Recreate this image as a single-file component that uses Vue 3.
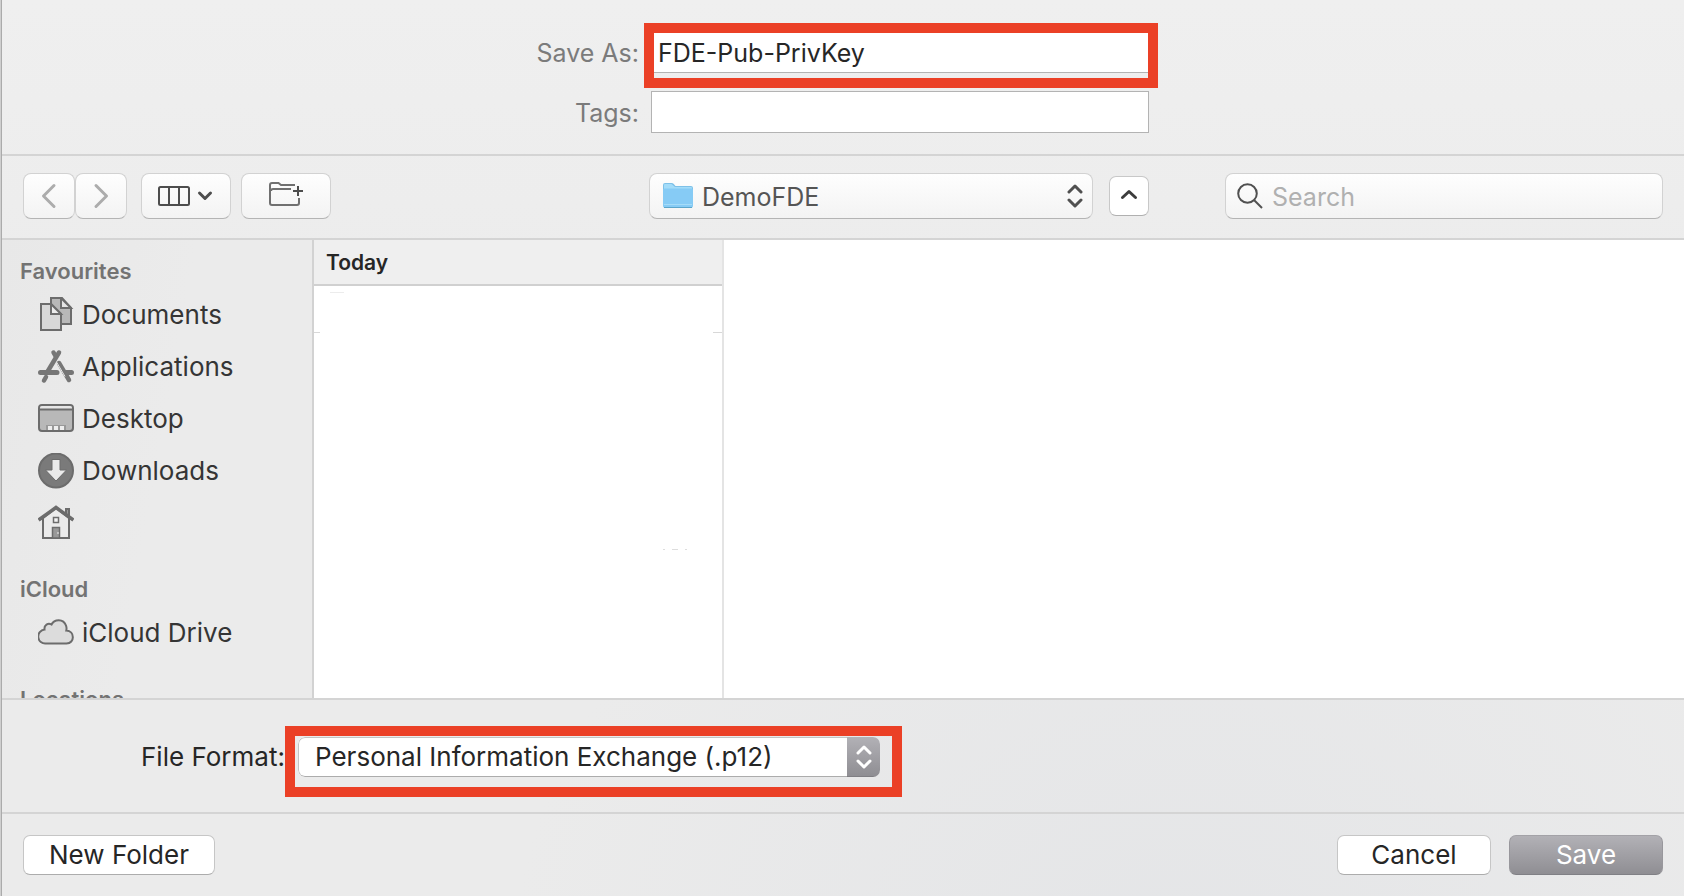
<script setup>
import { ref } from 'vue'

const fileName = ref('FDE-Pub-PrivKey')
const tags = ref('')
const search = ref('')
const location = ref('DemoFDE')
const format = ref('Personal Information Exchange (.p12)')

const sections = [
  {
    title: 'Favourites',
    items: [
      { icon: 'documents', label: 'Documents' },
      { icon: 'applications', label: 'Applications' },
      { icon: 'desktop', label: 'Desktop' },
      { icon: 'downloads', label: 'Downloads' },
      { icon: 'home', label: '' }
    ]
  },
  { title: 'iCloud', items: [{ icon: 'cloud', label: 'iCloud Drive' }] },
  { title: 'Locations', items: [] }
]
</script>

<template>
  <main class="dialog">
    <section class="names">
      <label for="name">Save As:</label>
      <div class="field marked">
        <input id="name" v-model="fileName" type="text" />
      </div>
      <label for="tags">Tags:</label>
      <div class="field">
        <input id="tags" v-model="tags" type="text" />
      </div>
    </section>

    <section class="toolbar">
      <div class="tools">
        <div class="nav">
          <button class="tool nav-btn" type="button" aria-label="Back">
            <svg width="24" height="28" viewBox="0 0 24 28"><path d="M17 3.500 6.500 14 17 24.500" fill="none" stroke="#acacac" stroke-width="3" stroke-linecap="round" stroke-linejoin="round" /></svg>
          </button>
          <button class="tool nav-btn" type="button" aria-label="Forward">
            <svg width="24" height="28" viewBox="0 0 24 28"><path d="M7 3.500 17.500 14 7 24.500" fill="none" stroke="#acacac" stroke-width="3" stroke-linecap="round" stroke-linejoin="round" /></svg>
          </button>
        </div>
        <button class="tool wide-btn" type="button" aria-label="View as columns">
          <svg width="56" height="20" viewBox="0 0 56 20" fill="none" stroke="#4d4d4d">
            <rect x="1" y="1" width="30" height="18" rx="1.500" stroke-width="2" />
            <path d="M11 1V19M21 1V19" stroke-width="2" />
            <path d="M41.500 7 47 12.500 52.500 7" stroke-width="3" stroke-linecap="round" stroke-linejoin="round" />
          </svg>
        </button>
        <button class="tool wide-btn" type="button" aria-label="New folder here">
          <svg class="new-icon" width="34" height="24" viewBox="0 0 34 24" fill="none" stroke="#707070" stroke-width="2">
            <path d="M26 3H12L9.500 1H3Q1 1 1 3V21Q1 23 3 23H28Q30 23 30 21V16" />
            <path d="M2 9Q2 7 4 7H22" />
            <path d="M29 4V14M24 9H34" stroke="#4d4d4d" />
          </svg>
        </button>
      </div>
      <div class="place">
        <div class="popup">
          <svg class="folder" width="30" height="26" viewBox="0 0 30 26">
            <path d="M0 22V2Q0 0 2 0H8.500Q10 0 11 1.200L12.500 3H28Q30 3 30 5V22Z" fill="#7ec1e8" />
            <path d="M1 7V2Q1 1 2 1H8.500L12 4H28Q29 4 29 5V7Z" fill="#a3dcf9" />
            <rect y="5.500" width="30" height="19" rx="1.500" fill="#86cbf5" />
            <path d="M1 21.500H29" stroke="#a5dcf8" />
            <path d="M1 24.500H29" stroke="#5ba5ca" />
          </svg>
          <select v-model="location" aria-label="Location">
            <option>DemoFDE</option>
          </select>
          <svg class="updown" width="16" height="26" viewBox="0 0 16 26"><path d="M2 9 8 3 14 9M2 17 8 23 14 17" fill="none" stroke="#505050" stroke-width="3" stroke-linecap="round" stroke-linejoin="round" /></svg>
        </div>
        <button class="collapse" type="button" aria-label="Collapse browser">
          <svg width="18" height="12" viewBox="0 0 18 12"><path d="M2.500 8.500 9 2.500 15.500 8.500" fill="none" stroke="#3c3c3c" stroke-width="3" stroke-linecap="round" stroke-linejoin="round" /></svg>
        </button>
      </div>
      <div class="search">
        <svg width="26" height="26" viewBox="0 0 26 26" fill="none" stroke="#505050" stroke-width="2"><circle cx="10.500" cy="10.500" r="9.300" /><path d="M17 17 25 25" /></svg>
        <input v-model="search" type="text" placeholder="Search" aria-label="Search" />
      </div>
    </section>

    <section class="browser">
      <nav class="sidebar">
        <div v-for="s in sections" :key="s.title" class="group">
          <h2>{{ s.title }}</h2>
          <a v-for="i in s.items" :key="i.icon" href="#" :aria-label="i.label || 'Home'">
            <svg width="36" height="36" viewBox="0 0 36 36" fill="none" stroke="#6c6c6c" stroke-width="2">
              <template v-if="i.icon === 'documents'">
                <path d="M13 1H24L33 11V27H13Z" fill="#b8b8b8" />
                <path d="M23 1V11H33Z" fill="#e4e4e4" />
                <path d="M3 7H13L23 17V33H3Z" fill="#d8d8d8" />
                <path d="M13 7V17H23Z" fill="#ebebeb" />
              </template>
              <template v-else-if="i.icon === 'applications'">
                <path d="M21 3.500 9 23.500M8 28 6 31.500" stroke="#767676" stroke-width="4.500" stroke-linecap="round" />
                <path d="M2.500 23.500H19M27 23.500H33.500" stroke="#767676" stroke-width="5" stroke-linecap="round" />
                <path d="M15.500 3.500 17.500 7M21 14 31 31" stroke="#767676" stroke-width="4.500" stroke-linecap="round" />
                <path d="M18.500 13 27 27.500" stroke="#ebebeb" stroke-width="1" />
              </template>
              <template v-else-if="i.icon === 'desktop'">
                <rect x="1" y="4" width="34" height="26" rx="3" fill="#b8b8b8" />
                <path d="M2 7Q2 5 4 5H32Q34 5 34 7V8H2Z" fill="#e6e6e6" stroke="none" />
                <path d="M1 8.500H35" />
                <path d="M8 24H28V29H8Z" fill="#999" stroke="none" />
                <path d="M10 25h4v4h-4zM16 25h4v4h-4zM22 25h4v4h-4z" fill="#eee" stroke="none" />
              </template>
              <template v-else-if="i.icon === 'downloads'">
                <circle cx="18" cy="17.500" r="17" fill="#7a7a7a" />
                <path d="M14 6.500H22V17H28.500L18 28 7.500 17H14Z" fill="#ebebeb" stroke-width="1" />
              </template>
              <template v-else-if="i.icon === 'home'">
                <path d="M28 10V4H31V13" fill="#999" />
                <path d="M5 13 18 3 31 13V33H5Z" fill="#ebebeb" />
                <path d="M2 14 18 2.500 34 14" stroke-width="3.500" stroke-linecap="square" />
                <rect x="15.500" y="12.500" width="5" height="5" stroke-width="1.500" fill="#f2f2f2" />
                <rect x="14.500" y="22.500" width="7" height="10.500" stroke-width="1.500" fill="#999" />
                <path d="M20 27V29" stroke="#eee" stroke-width="1" />
              </template>
              <template v-else>
                <path d="M8 28.500A7 7 0 0 1 6.500 14.500C6 10 10 7.500 13.500 9.500C16 4 25.500 3 28 10.500C28.700 12.500 28.700 14 28.300 15.500C37 16 37 28.500 28.500 28.500Z" fill="#dcdcdc" />
              </template>
            </svg>
            <span>{{ i.label }}</span>
          </a>
        </div>
      </nav>
      <div class="column">
        <h3>Today</h3>
        <div class="entry"></div>
        <div class="specks"><i></i><i></i><i></i><i></i></div>
      </div>
      <div class="preview"></div>
    </section>

    <section class="format">
      <label for="format">File Format:</label>
      <div class="format-mark">
        <div class="format-select">
          <select id="format" v-model="format">
            <option>Personal Information Exchange (.p12)</option>
          </select>
          <span class="cap">
            <svg width="16" height="26" viewBox="0 0 16 26"><path d="M2 9 8 3 14 9M2 17 8 23 14 17" fill="none" stroke="#fff" stroke-width="3" stroke-linecap="round" stroke-linejoin="round" /></svg>
          </span>
        </div>
      </div>
    </section>

    <footer>
      <button class="push new-folder" type="button">New Folder</button>
      <button class="push" type="button">Cancel</button>
      <button class="push primary" type="button">Save</button>
    </footer>
  </main>
</template>

<style>
body {
  margin: 0;
}
</style>

<style scoped>
* {
  box-sizing: border-box;
}
.dialog {
  display: flex;
  flex-direction: column;
  height: 100vh;
  padding-left: 2px;
  overflow: hidden;
  background:
    linear-gradient(90deg, #cfcfcf 1px, #ababab 1px, #ababab 2px, transparent 2px),
    radial-gradient(ellipse at 70% 108%, #e4e5e7 0, rgba(232, 232, 233, 0) 40%),
    linear-gradient(#efefef, #ebebeb 45%, #ebebeb);
  color: #262626;
  font-family: Inter, "Liberation Sans", sans-serif;
  font-size: 26px;
  line-height: 32px;
}
input,
select,
button {
  margin: 0;
  padding: 0;
  font: inherit;
  color: inherit;
  outline: none;
}
select {
  appearance: none;
  border: 0;
  background: transparent;
}
svg {
  display: block;
  flex: none;
}
.names,
.toolbar {
  font-size: 25px;
}
.names {
  display: grid;
  grid-template-columns: minmax(0, 637fr) 498px minmax(0, 523fr);
  column-gap: 12px;
  row-gap: 18px;
  align-items: center;
  padding: 31px 0 21px;
  border-bottom: 2px solid #d4d4d4;
}
.names label {
  grid-column: 1;
  justify-self: end;
  padding-top: 2px;
  color: #7b7b7b;
}
.names .field {
  position: relative;
  grid-column: 2;
}
.field input {
  display: block;
  width: 100%;
  height: 42px;
  padding: 1px 6px 0;
  border: 1px solid #b3b3b3;
  background: #fff;
}
.marked::after {
  content: "";
  position: absolute;
  inset: -8px -9px -15px -7px;
  border: 10px solid #eb4026;
  pointer-events: none;
}
.toolbar {
  display: grid;
  grid-template-columns: minmax(0, 647fr) 500px minmax(0, 535fr);
  align-items: center;
  padding: 17px 0 19px;
  border-bottom: 2px solid #d4d4d4;
}
.tools {
  display: flex;
  padding-left: 21px;
}
.nav {
  display: flex;
  margin-right: 14px;
}
.tool,
.popup,
.search {
  display: flex;
  align-items: center;
  height: 46px;
  border: 1px solid #d2d2d2;
  border-bottom-color: #b4b4b4;
  border-radius: 8px;
  background: linear-gradient(#fefefe, #f3f3f3);
}
.tool {
  justify-content: center;
}
.nav-btn {
  width: 52px;
}
.wide-btn {
  width: 90px;
}
.wide-btn + .wide-btn {
  margin-left: 10px;
}
.new-icon {
  margin-bottom: 4px;
}
.place {
  display: flex;
  align-items: center;
  gap: 16px;
}
.popup {
  position: relative;
  flex: 1;
  color: #555;
}
.folder {
  position: absolute;
  left: 13px;
}
.popup select {
  width: 100%;
  height: 44px;
  padding: 2px 0 0 52px;
}
.updown {
  position: absolute;
  right: 9px;
  pointer-events: none;
}
.collapse {
  display: flex;
  align-items: center;
  justify-content: center;
  width: 40px;
  height: 40px;
  padding-bottom: 2px;
  border: 1px solid #c8c8c8;
  border-bottom-color: #b0b0b0;
  border-radius: 7px;
  background: #fff;
}
.search {
  margin: 0 21px 0 76px;
  padding-left: 11px;
  gap: 9px;
}
.search input {
  flex: 1;
  min-width: 0;
  padding-top: 2px;
  border: 0;
  background: transparent;
}
.search input::placeholder {
  color: #b0b0b0;
  opacity: 1;
}
.browser {
  display: flex;
  flex: 1;
  min-height: 0;
  border-bottom: 2px solid #d4d4d4;
  background: #fff;
}
.sidebar {
  flex: none;
  width: 312px;
  padding-top: 11px;
  overflow: hidden;
  border-right: 2px solid #d2d2d2;
  background: linear-gradient(100deg, #e8e8e8, #ebebeb 50%);
}
.group {
  margin-bottom: 20px;
}
h2,
h3 {
  margin: 0;
  font-weight: 600;
}
h2 {
  height: 38px;
  padding-left: 18px;
  color: #737373;
  font-size: 22px;
  line-height: 40px;
}
.sidebar a {
  display: flex;
  align-items: center;
  gap: 8px;
  height: 52px;
  padding-left: 36px;
  color: #353535;
  text-decoration: none;
}
.column {
  position: relative;
  flex: none;
  width: 410px;
  border-right: 2px solid #e4e4e4;
}
h3 {
  height: 46px;
  padding-left: 12px;
  border-bottom: 2px solid #d0d0d0;
  background: #efefef;
  font-size: 21px;
  line-height: 46px;
}
.entry {
  position: relative;
  height: 47px;
}
.entry::before,
.entry::after {
  content: "";
  position: absolute;
  bottom: 0;
  width: 6px;
  height: 1px;
  background: #d8d8d8;
}
.entry::after {
  right: 0;
  width: 9px;
}
.specks i {
  position: absolute;
  left: 349px;
  top: 309px;
  width: 2px;
  height: 1px;
  background: #ddd;
}
.specks i:nth-child(2) {
  left: 358px;
  width: 6px;
}
.specks i:nth-child(3) {
  left: 371px;
}
.specks i:nth-child(4) {
  left: 16px;
  top: 52px;
  width: 14px;
  background: #ececec;
}
.format {
  display: flex;
  align-items: center;
  padding: 26px 0 15px 139px;
  border-bottom: 2px solid #d4d4d4;
}
.format label {
  width: 144px;
  margin-bottom: 10px;
  white-space: nowrap;
}
.format-mark {
  padding: 1px 12px 10px 3px;
  border: 10px solid #eb4026;
}
.format-select {
  display: flex;
  width: 582px;
  height: 40px;
  overflow: hidden;
  border-radius: 7px;
  background: #fff;
}
.format-select select {
  flex: 1;
  min-width: 0;
  padding-left: 16px;
  border: 1px solid #c4c4c4;
  border-right: 0;
  border-bottom-color: #acacac;
  border-radius: 7px 0 0 7px;
}
.cap {
  display: flex;
  align-items: center;
  justify-content: center;
  width: 33px;
  border-bottom: 1px solid #7f7e83;
  background: linear-gradient(#b2b1b6, #8f8e93);
}
footer {
  display: flex;
  gap: 18px;
  padding: 21px;
}
.push {
  width: 154px;
  height: 40px;
  border: 1px solid #c6c6c6;
  border-bottom-color: #acacac;
  border-radius: 7px;
  background: #fff;
  line-height: 36px;
}
.new-folder {
  width: 192px;
  margin-right: auto;
}
.primary {
  border-color: #a3a2a7 #98979c #808085;
  background: linear-gradient(#b2b1b6, #8f8e93);
  color: #fff;
}
</style>
